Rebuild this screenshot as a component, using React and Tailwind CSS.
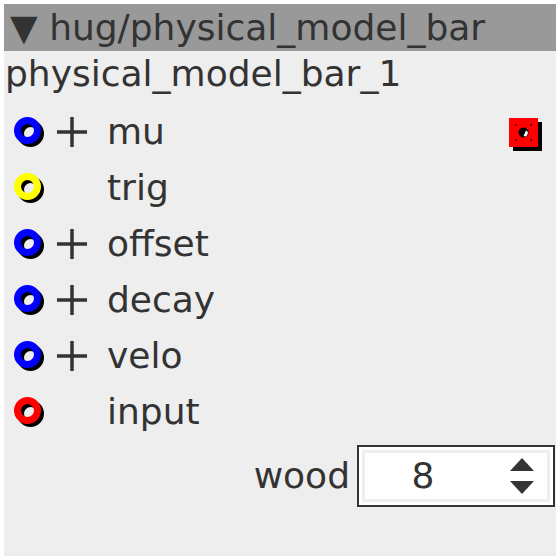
const PORTS = [
  { name: 'mu', color: '#0000ff', plus: true, out: true },
  { name: 'trig', color: '#ffff00', plus: false },
  { name: 'offset', color: '#0000ff', plus: true },
  { name: 'decay', color: '#0000ff', plus: true },
  { name: 'velo', color: '#0000ff', plus: true },
  { name: 'input', color: '#ff0000', plus: false },
];

const Ring = ({ color }) => (
  <svg width="31" height="31" viewBox="0 0 31 31" className="shrink-0">
    <circle cx="16.5" cy="16.5" r="10" fill="none" stroke="#000" strokeWidth="7" />
    <circle cx="13.5" cy="13.5" r="10" fill="none" stroke={color} strokeWidth="7" />
  </svg>
);

const Plus = () => (
  <svg width="30" height="30" viewBox="0 0 30 30" className="shrink-0">
    <path d="M0 15 H30 M15 0 V30" stroke="#333333" strokeWidth="3.5" />
  </svg>
);

const OutPort = () => (
  <svg width="34" height="34" viewBox="0 0 34 34" className="shrink-0">
    <rect x="4" y="4" width="29" height="29" fill="#000" />
    <rect x="0" y="0" width="29" height="29" fill="#ff0000" />
    <circle cx="14.5" cy="14.5" r="5" fill="#000" />
    <path d="M17 12.5 A3 3 0 0 1 14.5 18 Z" fill="#fff" />
    <rect x="6" y="6" width="1.5" height="1.5" fill="#000" />
    <rect x="21.5" y="6" width="1.5" height="1.5" fill="#000" />
    <rect x="6" y="21.5" width="1.5" height="1.5" fill="#000" />
    <rect x="21.5" y="21.5" width="1.5" height="1.5" fill="#000" />
  </svg>
);

export default function App() {
  return (
    <div className="w-[560px] h-[560px] bg-white p-1" style={{ fontFamily: '"DejaVu Sans", sans-serif' }}>
      <div className="h-full bg-[#eeeeee] text-[#333333] text-[36px] flex flex-col">
        {/* header */}
        <div className="h-[47px] leading-[47px] bg-[#999999] pl-[6px] whitespace-nowrap">
          ▼ hug/physical_model_bar
        </div>
        <div className="h-[53px] leading-[45px] pl-[1px] whitespace-nowrap">physical_model_bar_1</div>

        {PORTS.map(p => (
          <div key={p.name} className="h-[56px] flex items-center pl-[10px]">
            <Ring color={p.color} />
            <div className="w-[30px] ml-[12px]">{p.plus && <Plus />}</div>
            <span className="ml-[20px] leading-none">{p.name}</span>
            {p.out && (
              <div className="ml-auto mr-[13px] mt-[6px]">
                <OutPort />
              </div>
            )}
          </div>
        ))}

        {/* wood param */}
        <div className="flex items-center justify-end pt-[5px] pr-px">
          <span className="leading-none mr-[7px]">wood</span>
          <div className="w-[198px] h-[62px] border-2 border-[#333333] bg-white p-[3px]">
            <div className="h-full border-[3px] border-[#eeeeee] bg-white flex items-center">
              <span className="w-[116px] text-center leading-none">8</span>
              <div className="w-[24px] ml-auto mr-[13px] flex flex-col items-center gap-[9px]">
                <svg width="24" height="14" viewBox="0 0 24 14"><path d="M12 0 L24 13 L0 13 Z" fill="#333333" /></svg>
                <svg width="24" height="13" viewBox="0 0 24 13"><path d="M0 0 L24 0 L12 13 Z" fill="#333333" /></svg>
              </div>
            </div>
          </div>
        </div>
      </div>
    </div>
  );
}
